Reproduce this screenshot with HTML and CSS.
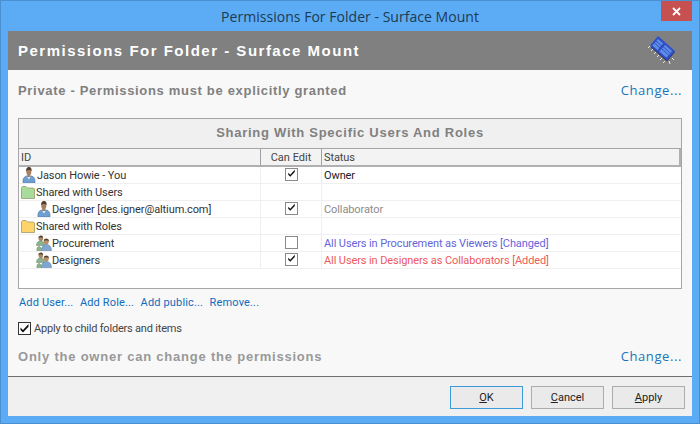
FILE: index.html
```html
<!DOCTYPE html>
<html lang="en">
<head>
<meta charset="utf-8">
<title>Permissions For Folder - Surface Mount</title>
<link rel="stylesheet" href="styles.css">
</head>
<body>
<svg class="defs" width="0" height="0" aria-hidden="true">
  <defs>
    <symbol id="user" viewBox="0 0 16 16">
      <path d="M2 16c-.5-4 1-6.500 3.500-7l2.500.5 2.500-.5c2.500.5 4 3 3.500 7z" fill="#6f9fd0" stroke="#4f78a8" stroke-width=".6"/>
      <path d="M5.500 9h4.500l-2 3.500z" fill="#e4ecf4"/>
      <ellipse cx="7.800" cy="4.600" rx="2.500" ry="4.100" fill="#a9805c"/>
      <path d="M5.200 4.200C5 1 6.500 0 8 0s3 1 2.500 4.200C9.500 2.600 6.500 2.600 5.200 4.200z" fill="#4f3f32"/>
      <path d="M6 8.500h3.600v1.200H6z" fill="#6f5640"/>
    </symbol>
    <symbol id="role" viewBox="0 0 16 16">
      <ellipse cx="4.800" cy="3.300" rx="2.300" ry="2.800" fill="#a88a68"/>
      <path d="M2.500 2.800c0-2.500 4.600-2.700 4.600 0C5.800 2 3.800 2 2.500 2.800z" fill="#4f3f32"/>
      <path d="M.5 10.500c0-3 1.500-4.500 4.300-4.500S8.500 7.500 8.500 10.500z" fill="#8fb08f" stroke="#5f8a60" stroke-width=".5"/>
      <ellipse cx="10.300" cy="6.500" rx="2.500" ry="2.900" fill="#b98f68"/>
      <path d="M7.800 6c-.2-2.800 5.200-3 5 0-1.500-1-3.500-1-5 0z" fill="#4f3f32"/>
      <path d="M5.500 15.500c0-3.800 1.800-6 4.800-6s5 2.200 5.200 6z" fill="#7fa6d0" stroke="#4f78a8" stroke-width=".5"/>
      <path d="M.8 15.500c0-2.500.8-4 2.200-4s2.500 1.500 2.500 4z" fill="#8fb08f" stroke="#5f8a60" stroke-width=".5"/>
    </symbol>
    <symbol id="folder" viewBox="0 0 14 13">
      <path d="M.5 12.500V1.500L1.500.5h3.500l1.500 1.500h6l1 1v9.500z" fill="currentColor" stroke="#8f8f5c" stroke-width=".7"/>
    </symbol>
    <symbol id="check" viewBox="0 0 11 11">
      <path d="M1.500 4.500L4 7l5.500-6v2.800L4 9.500 1.500 7z" fill="#111"/>
    </symbol>
  </defs>
</svg>
<div class="window">
  <header class="titlebar">
    <span class="title">Permissions For Folder - Surface Mount</span>
    <span class="close">
      <svg width="9" height="9" viewBox="0 0 9 9"><path d="M1 1l7 7M8 1L1 8" stroke="#fff" stroke-width="1.800"/></svg>
    </span>
  </header>
  <div class="client">
    <div class="banner">
      <h1>Permissions For Folder - Surface Mount</h1>
      <svg class="chip" width="30" height="30" viewBox="0 0 30 30">
        <g stroke="#e8e8e8" stroke-width="1">
          <path d="M3 11l-2 2M6 14l-2 2M9 17l-2 2M12 20l-2 2M15 23l-2 2M18 26l-2 2M22 26l1 3M19 23l1 3M25 23l2 2"/>
        </g>
        <path d="M11 1.500l16 14-8 9.500L3 11z" fill="#2c3358" transform="translate(1 1.500)"/>
        <path d="M11 1l17 15-8 9.500L3 10.500z" fill="#2f50c8"/>
        <path d="M11 3.500l-6 7 5.500 5 6-7zM18 9.500l-6 7 7.500 6.500 6-7z" fill="#5f8cec" stroke="#2544ac" stroke-width=".6"/>
        <path d="M9 6l5.500 5M7.500 8l5.500 5M16 11.500l7 6.300M14.500 13.500l7 6.300" stroke="#2544ac" stroke-width=".8"/>
      </svg>
    </div>
    <div class="body">
      <div class="statusline first">
        <span class="heading">Private - Permissions must be explicitly granted</span>
        <a class="change">Change...</a>
      </div>
      <section class="panel">
        <h2>Sharing With Specific Users And Roles</h2>
        <div class="grid">
          <div class="row head">
            <div class="c id">ID</div>
            <div class="c edit">Can Edit</div>
            <div class="c status">Status</div>
          </div>
          <div class="row">
            <div class="c id"><svg class="ic"><use href="#user"/></svg>Jason Howie - You</div>
            <div class="c edit"><span class="box"><svg class="tick"><use href="#check"/></svg></span></div>
            <div class="c status owner">Owner</div>
          </div>
          <div class="row">
            <div class="c id"><svg class="fold green"><use href="#folder"/></svg>Shared with Users</div>
            <div class="c edit"></div>
            <div class="c status"></div>
          </div>
          <div class="row">
            <div class="c id sub"><svg class="ic"><use href="#user"/></svg>DesIgner [des.igner@altium.com]</div>
            <div class="c edit"><span class="box"><svg class="tick"><use href="#check"/></svg></span></div>
            <div class="c status collab">Collaborator</div>
          </div>
          <div class="row">
            <div class="c id"><svg class="fold yellow"><use href="#folder"/></svg>Shared with Roles</div>
            <div class="c edit"></div>
            <div class="c status"></div>
          </div>
          <div class="row">
            <div class="c id sub"><svg class="ic"><use href="#role"/></svg>Procurement</div>
            <div class="c edit"><span class="box"></span></div>
            <div class="c status changed">All Users in Procurement as Viewers [Changed]</div>
          </div>
          <div class="row">
            <div class="c id sub"><svg class="ic"><use href="#role"/></svg>Designers</div>
            <div class="c edit"><span class="box"><svg class="tick"><use href="#check"/></svg></span></div>
            <div class="c status added">All Users in Designers as Collaborators [Added]</div>
          </div>
        </div>
      </section>
      <nav class="actions">
        <a>Add User...</a><a>Add Role...</a><a>Add public...</a><a>Remove...</a>
      </nav>
      <label class="apply">
        <span class="box dark"><svg class="tick big"><use href="#check"/></svg></span>
        Apply to child folders and items
      </label>
      <div class="statusline last">
        <span class="heading light">Only the owner can change the permissions</span>
        <a class="change">Change...</a>
      </div>
    </div>
    <footer class="footer">
      <button class="btn default"><u>O</u>K</button>
      <button class="btn"><u>C</u>ancel</button>
      <button class="btn"><u>A</u>pply</button>
    </footer>
  </div>
</div>
</body>
</html>
```
FILE: styles.css
```css
* { box-sizing: border-box; }
html, body { margin: 0; padding: 0; }
body {
  width: 700px;
  height: 424px;
  overflow: hidden;
  font-family: Roboto, "Noto Sans", sans-serif;
  font-size: 11px;
  color: #333;
}
.defs { display: block; height: 0; }
a { color: #0f6cbd; }

.window {
  width: 700px;
  height: 424px;
  background: #5cacf5;
  border: 1px solid #4a90d0;
  padding: 0 7px 7px 7px;
  display: flex;
  flex-direction: column;
}
.titlebar {
  height: 30px;
  flex: none;
  display: flex;
  justify-content: center;
  align-items: center;
  position: relative;
}
.title {
  font-family: "Open Sans", sans-serif;
  font-size: 14px;
  letter-spacing: .03px;
  color: #1d3a52;
}
.close {
  position: absolute;
  top: 0;
  right: 0;
  width: 31px;
  height: 20px;
  background: #c75050;
  display: flex;
  align-items: center;
  justify-content: center;
}
.client {
  flex: 1;
  display: flex;
  flex-direction: column;
  min-height: 0;
}
.banner {
  height: 39px;
  flex: none;
  background: #808080;
  display: flex;
  align-items: center;
  justify-content: space-between;
  padding: 0 10px 1px 10px;
}
.banner h1 {
  margin: 0;
  font-family: "Liberation Sans", sans-serif;
  font-size: 15px;
  font-weight: 700;
  letter-spacing: 1.5px;
  color: #fff;
}
.chip { margin-right: 5px; }
.body {
  flex: 1;
  background: #f8f8f8;
  border-bottom: 1px solid #6e6e6e;
  padding: 0 10px;
  display: flex;
  flex-direction: column;
  min-height: 0;
}
.statusline {
  display: flex;
  justify-content: space-between;
  align-items: center;
  flex: none;
  height: 20px;
}
.statusline.first { margin-top: 10px; }
.statusline.last { margin-top: 10px; }
.heading {
  font-family: "Liberation Sans", sans-serif;
  font-size: 13px;
  font-weight: 700;
  letter-spacing: .68px;
  color: #808080;
}
.heading.light { color: #999; letter-spacing: .78px; }
.change {
  font-family: "Open Sans", sans-serif;
  font-size: 13px;
  letter-spacing: .6px;
  color: #1a75bb;
}
.panel {
  flex: none;
  margin-top: 18px;
  height: 171px;
  border: 1px solid #a6a6a6;
  background: #fff;
  display: flex;
  flex-direction: column;
}
.panel h2 {
  margin: 0;
  flex: none;
  height: 30px;
  background: #f0f0f0;
  border-bottom: 1px solid #a6a6a6;
  text-align: center;
  line-height: 28px;
  font-family: "Liberation Sans", sans-serif;
  font-size: 13px;
  font-weight: 700;
  letter-spacing: .73px;
  color: #808080;
}
.row {
  display: flex;
  height: 17px;
  border-bottom: 1px solid #efefef;
  color: #333;
}
.row.head {
  height: 18px;
  background: #f3f3f3;
  border-bottom: 2px solid #b0b0b0;
  border-right: 2px solid #b0b0b0;
  color: #444;
}
.c {
  display: flex;
  align-items: center;
  white-space: nowrap;
  overflow: hidden;
  line-height: 16px;
  padding-top: 1px;
  letter-spacing: -.1px;
}
.id { width: 241px; padding-left: 2px; flex: none; }
.id.sub { padding-left: 17px; }
.edit {
  width: 61px;
  flex: none;
  justify-content: center;
  border-left: 1px solid #efefef;
  letter-spacing: 0;
}
.status {
  flex: 1;
  border-left: 1px solid #efefef;
  padding-left: 2px;
}
.head .edit, .head .status { border-left-color: #a0a0a0; }
.owner { color: #222; }
.collab { color: #8c8c8c; }
.changed { color: #6464dc; }
.added { color: #ee5a5a; }
.ic { width: 16px; height: 16px; flex: none; margin-top: -1px; }
.fold { width: 14px; height: 13px; margin-right: 1px; flex: none; }
.fold.green { color: #a8dc9c; }
.fold.yellow { color: #fdd36a; }
.box {
  width: 13px;
  height: 13px;
  flex: none;
  margin-bottom: 2px;
  border: 1px solid #8a8a8a;
  background: #fff;
  display: block;
}
.tick { display: block; width: 9px; height: 9px; margin: 0 0 0 1px; }
.tick.big { width: 11px; height: 11px; margin: 0; }
.box.dark { border-color: #333; margin-bottom: 0; }
.actions {
  display: flex;
  gap: 6.5px;
  flex: none;
  height: 14px;
  margin-top: 6px;
  margin-left: 1px;
  align-items: center;
  letter-spacing: .15px;
  color: #0f6cbd;
}
.apply {
  display: flex;
  align-items: center;
  gap: 3px;
  flex: none;
  height: 16px;
  margin-top: 11px;
  letter-spacing: -.2px;
  color: #444;
}
.footer {
  flex: none;
  height: 39px;
  background: #f0f0f0;
  display: flex;
  justify-content: flex-end;
  align-items: flex-start;
  gap: 8px;
  padding: 9px 7px 0 0;
}
.btn {
  width: 73px;
  height: 23px;
  padding: 0;
  background: #eaeaea;
  border: 1px solid #acacac;
  font-family: Roboto, sans-serif;
  font-size: 11px;
  color: #222;
}
.btn.default { border-color: #3d9ad8; }
```
